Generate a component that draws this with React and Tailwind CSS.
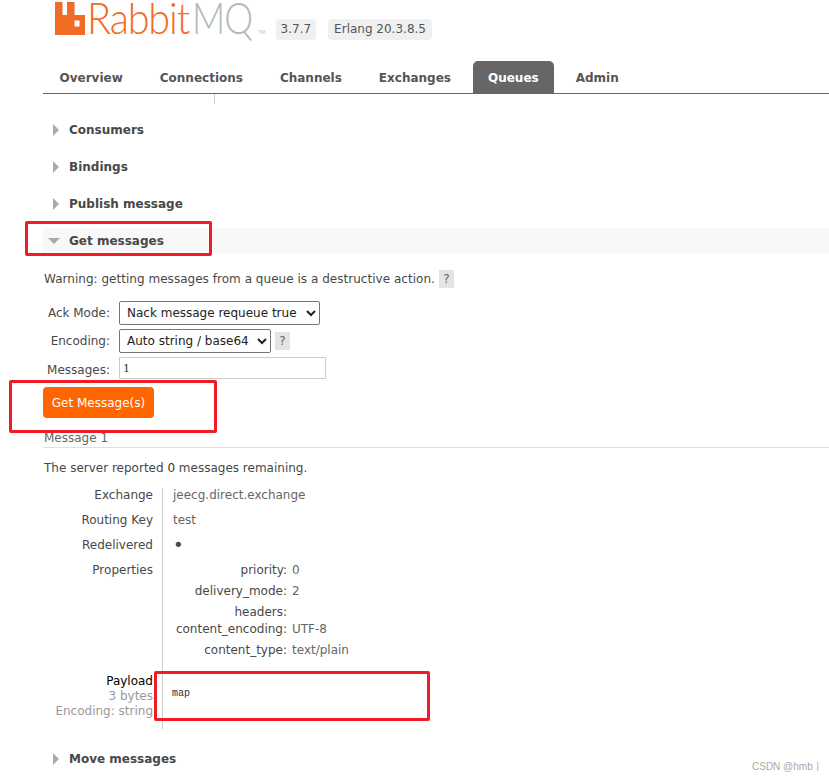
const tabs = ["Overview", "Connections", "Channels", "Exchanges", "Queues", "Admin"];

const Triangle = ({ open }) => (
  <svg width="12" height="12" viewBox="0 0 12 12" className="shrink-0">
    {open ? <path d="M0 3h12L6 9z" fill="#aaa" /> : <path d="M3 0l6 6-6 6z" fill="#aaa" />}
  </svg>
);

const Logo = () => (
  <div className="flex items-end h-[36px] ml-[12px]">
    <svg width="30" height="33" viewBox="0 0 30 33" className="shrink-0 mb-[1px]">
      <path
        fillRule="evenodd"
        d="M0 0h7.500v13h4.500V0h7.500v13H30v20H0zM19.500 18.500v6h5v-6z"
        fill="#f26b25"
      />
    </svg>
    <span className="font-['Lato'] font-light text-[#f26b25] text-[43px] leading-[36px] tracking-[-1.2px] ml-[2px] mr-[-6px] scale-x-[0.92] origin-left block">
      Rabbit
    </span>
    <span className="font-['Lato'] font-light text-[#aebcb6] text-[43px] leading-[36px] tracking-[-1px] mr-[-5px] scale-x-[0.85] origin-left block">
      MQ
    </span>
    <span className="text-[5px] text-[#b8c4bf] mb-[1px] leading-none">TM</span>
  </div>
);

const Section = ({ title, open }) => (
  <div className={`h-[25px] flex items-center ${open ? "bg-[#f8f8f8] pl-[5px]" : "pl-[7px]"}`}>
    <Triangle open={open} />
    <span className={`font-bold text-[#484848] ${open ? "ml-[9px]" : "ml-[7px]"}`}>{title}</span>
  </div>
);

const Help = () => (
  <span className="inline-block w-[15px] h-[18px] leading-[18px] text-center bg-[#e4e4e4] text-[#666]">?</span>
);

const Row = ({ label, children, className = "h-[25px]" }) => (
  <div className={`flex ${className}`}>
    <div className="w-[120px] text-right pr-[9px] text-[#484848] border-r border-[#ccc] shrink-0">{label}</div>
    <div className="pl-[10px] text-[#666]">{children}</div>
  </div>
);

const Prop = ({ name, value, className }) => (
  <div className={`flex ${className}`}>
    <div className="w-[124px] text-right text-[#484848] shrink-0">{name}:</div>
    <div className="ml-[5px] text-[#666]">{value}</div>
  </div>
);

const Mark = ({ className }) => (
  <div className={`absolute border-[3px] border-[#ee1c25] rounded-[2px] ${className}`} />
);

export default function App() {
  return (
    <div className="relative w-[829px] h-[780px] overflow-hidden bg-white font-['DejaVu_Sans',sans-serif] text-[12px] leading-[14px] text-[#484848] pl-[43px]">
      {/* header */}
      <div className="h-[61px] flex items-start">
        <Logo />
        <div className="flex gap-[12px] mt-[19px] ml-[10px] text-[#555]">
          <span className="h-[21px] leading-[21px] px-[5px] bg-[#f0f0f0] rounded-[4px]">3.7.7</span>
          <span className="h-[21px] leading-[21px] px-[6px] bg-[#f0f0f0] rounded-[4px]">Erlang 20.3.8.5</span>
        </div>
      </div>
      <div className="h-[33px] flex border-b border-[#666] pl-[1.500px]">
        {tabs.map((t) => (
          <div
            key={t}
            className={`px-[15px] mr-[7px] h-[32px] leading-[32px] pt-px font-bold rounded-t-[5px] ${
              t === "Queues" ? "bg-[#666] text-white" : "text-[#555]"
            }`}
          >
            {t}
          </div>
        ))}
      </div>
      <div className="ml-[171px] w-px h-[10px] bg-[#ccc]" />

      {/* collapsed sections */}
      <div className="flex flex-col gap-[12px] mt-[13px]">
        <Section title="Consumers" />
        <Section title="Bindings" />
        <Section title="Publish message" />
        <Section title="Get messages" open />
      </div>

      {/* get messages form */}
      <div className="mt-[17px] ml-px flex items-center h-[18px] gap-[4px] tracking-[0.03px]">
        <span>Warning: getting messages from a queue is a destructive action.</span>
        <Help />
      </div>
      <div className="mt-[13px] flex items-center h-[23px]">
        <label className="w-[67px] text-right">Ack Mode:</label>
        <select className="ml-[9px] w-[201px] h-[24px] pl-[3px] border border-[#767676] rounded-[2px] text-[#222]">
          <option>Nack message requeue true</option>
        </select>
      </div>
      <div className="mt-[5px] flex items-center h-[24px]">
        <label className="w-[67px] text-right">Encoding:</label>
        <select className="ml-[9px] w-[152px] h-[24px] pl-[3px] border border-[#767676] rounded-[2px] text-[#222]">
          <option>Auto string / base64</option>
        </select>
        <span className="ml-[4px]">
          <Help />
        </span>
      </div>
      <div className="mt-[4px] flex items-center h-[22px]">
        <label className="w-[67px] text-right mt-[3px]">Messages:</label>
        <input
          defaultValue="1"
          className="ml-[9px] w-[207px] h-[22px] px-[3px] border border-[#ccc] font-['DejaVu_Serif',serif] text-[11px] text-[#333]"
        />
      </div>
      <button className="block mt-[8px] w-[111px] h-[31px] bg-[#ff6600] text-white rounded-[4px]">Get Message(s)</button>

      {/* message */}
      <div className="mt-[13px] h-[17px] pl-px text-[#666] border-b border-[#e0e0e0]">Message 1</div>
      <p className="mt-[13px] ml-px">
        The server reported <b className="font-normal text-[#333]">0</b> messages remaining.
      </p>

      <div className="mt-[13px]">
        <Row label="Exchange">jeecg.direct.exchange</Row>
        <Row label="Routing Key">test</Row>
        <Row label="Redelivered">
          <span className="text-[18px] leading-[14px] text-[#484848]">•</span>
        </Row>
        <Row label="Properties" className="h-[111px]">
          <div className="-ml-[10px]">
            <Prop name="priority" value="0" className="h-[21px]" />
            <Prop name="delivery_mode" value="2" className="h-[21px]" />
            <Prop name="headers" value="" className="h-[17px]" />
            <Prop name="content_encoding" value="UTF-8" className="h-[21px]" />
            <Prop name="content_type" value="text/plain" className="h-[21px]" />
          </div>
        </Row>
        <Row
          className="h-[52px]"
          label={
            <>
              <div className="h-[15px] text-black">Payload</div>
              <div className="h-[15px] text-[#999]">3 bytes</div>
              <div className="h-[15px] text-[#999]">Encoding: string</div>
            </>
          }
        >
          <pre className="font-['Liberation_Mono',monospace] text-[10px] leading-[10px] mt-[15px] -ml-px text-[#333]">map</pre>
        </Row>
        <div className="ml-[119px] w-px h-[3px] bg-[#ccc]" />
      </div>

      <div className="mt-[17px]">
        <Section title="Move messages" />
      </div>

      {/* red annotation boxes */}
      <Mark className="left-[25px] top-[221px] w-[187px] h-[35px]" />
      <Mark className="left-[9px] top-[380px] w-[208px] h-[53px]" />
      <Mark className="left-[154px] top-[671px] w-[276px] h-[50px]" />

      <span className="absolute left-[752px] top-[761px] font-['Liberation_Sans','Noto_Sans_CJK_SC',sans-serif] text-[10px] leading-[12px] text-[#aaa]">
        CSDN @hmb丨
      </span>
    </div>
  );
}
